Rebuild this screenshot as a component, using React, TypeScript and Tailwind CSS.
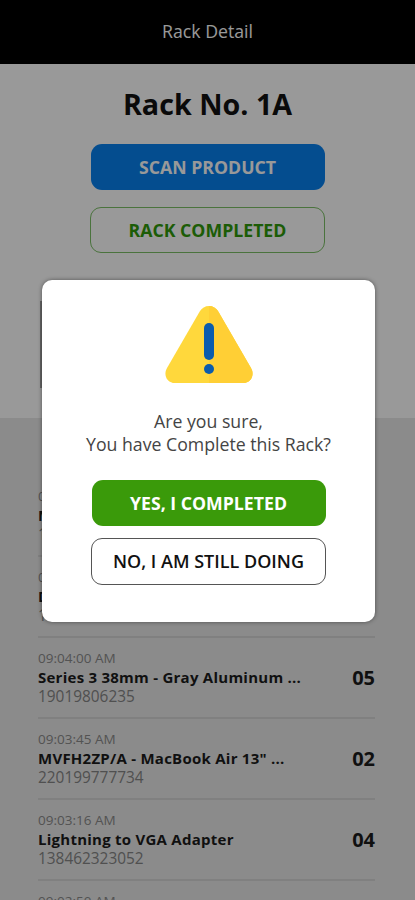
const font = { fontFamily: '"Open Sans", sans-serif' }

const rows = [
  { time: '09:04:25 AM', name: 'MacBook Pro 13" Space Gray', code: '190198062351', qty: '03' },
  { time: '09:04:10 AM', name: 'Dock Connector to USB Cable', code: '190198062352', qty: '01' },
  { time: '09:04:00 AM', name: 'Series 3 38mm - Gray Aluminum ...', code: '19019806235', qty: '05' },
  { time: '09:03:45 AM', name: 'MVFH2ZP/A - MacBook Air 13" ...', code: '220199777734', qty: '02' },
  { time: '09:03:16 AM', name: 'Lightning to VGA Adapter', code: '138462323052', qty: '04' },
  { time: '09:02:50 AM', name: 'USB-C Charge Cable', code: '138462323053', qty: '01' },
]

function WarningIcon() {
  return (
    <svg width="90" height="80" viewBox="0 0 90 80">
      <path d="M45 1c-4 0-7 2-9 5L3 63c-4 7 0 15 8 15h68c8 0 12-8 8-15L54 6c-2-3-5-5-9-5z" fill="#ffd83c" />
      <path d="M45 1c4 0 7 2 9 5l33 57c4 7 0 15-8 15H45z" fill="#ffcf35" />
      <rect x="40" y="18" width="10" height="37" rx="5" fill="#0b5cad" />
      <circle cx="45" cy="64" r="5" fill="#0b5cad" />
    </svg>
  )
}

export default function App() {
  return (
    <div className="relative h-[900px] w-[415px] overflow-hidden bg-white" style={font}>
      <div className="flex h-16 items-center justify-center bg-black pb-[2px] text-[17.7px] text-white">
        Rack Detail
      </div>

      <div className="flex h-[354px] flex-col items-center">
        <h1 className="mt-[22px] text-[28.7px] leading-9 font-bold text-[#111]">Rack No. 1A</h1>
        <div className="mt-[22px] flex h-[46px] w-[234px] items-center justify-center rounded-[11px] bg-[#0880ee] text-[17.7px] font-bold text-white">
          SCAN PRODUCT
        </div>
        <div className="mt-[17px] flex h-[46px] w-[235px] items-center justify-center rounded-[11px] border border-[#7cc066] text-[17.7px] font-bold text-[#2f9a0a]">
          RACK COMPLETED
        </div>
        {/* card mostly hidden behind the dialog */}
        <div className="mt-[48px] ml-[40px] h-[87px] w-[100px] self-start border-l-2 border-[#a8a8a8]" />
      </div>

      <div className="h-[482px] bg-[#e8e8e8] pt-[58px] pr-[40px] pl-[38px]">
        {rows.map((r) => (
          <div key={r.time} className="flex h-[81px] items-center justify-between border-b-2 border-[#d6d6d6]">
            <div className="min-w-0">
              <div className="text-[13.5px] leading-[19px] text-[#8a8a8a]">{r.time}</div>
              <div className="text-[15px] leading-[19px] font-bold tracking-[0.25px] text-[#1c1c1c]">{r.name}</div>
              <div className="text-[15.4px] leading-[20px] text-[#858585]">{r.code}</div>
            </div>
            <div className="text-[20px] font-bold text-[#1c1c1c]">{r.qty}</div>
          </div>
        ))}
      </div>

      {/* dim layer + dialog */}
      <div className="absolute inset-0 bg-black/40" />
      <div className="absolute top-[280px] left-[42px] flex h-[342px] w-[333px] flex-col items-center rounded-[10px] bg-white pt-[25px] shadow-[0_0_4px_rgba(0,0,0,0.45)]">
        <WarningIcon />
        <p className="mt-[25px] text-center text-[17.7px] leading-[23px] text-[#444]">
          Are you sure,
          <br />
          You have Complete this Rack?
        </p>
        <div className="mt-[24px] flex h-[46px] w-[234px] items-center justify-center rounded-[11px] bg-[#3a9a0a] text-[17.7px] font-bold text-white">
          YES, I COMPLETED
        </div>
        <div className="mt-[12px] flex h-[47px] w-[235px] items-center justify-center rounded-[11px] border border-[#555] text-[18px] font-semibold text-[#111]">
          NO, I AM STILL DOING
        </div>
      </div>
    </div>
  )
}
